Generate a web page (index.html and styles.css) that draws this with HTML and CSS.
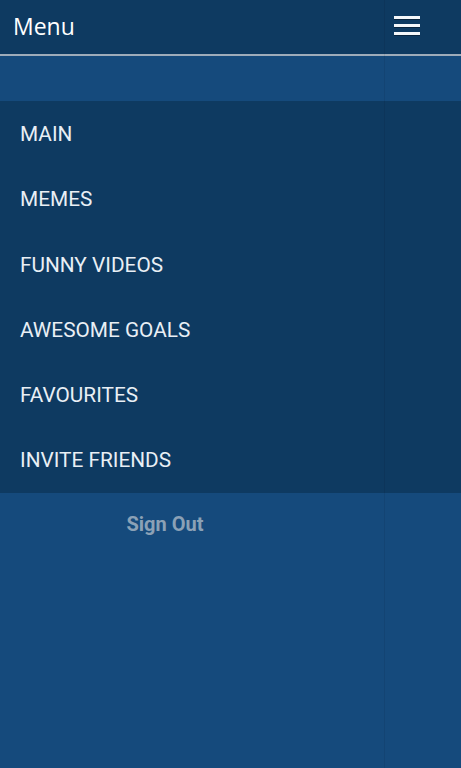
FILE: index.html
```html
<!DOCTYPE html>
<html lang="en">

<head>
    <meta charset="UTF-8">
    <meta name="viewport" content="width=device-width, initial-scale=1.0">
    <title>Menu</title>
    <link rel="stylesheet" href="styles.css">
</head>

<body>
    <div class="screen">
        <header class="topbar">
            <div class="topbar__title">Menu</div>
            <div class="topbar__toggle">
                <span></span>
                <span></span>
                <span></span>
            </div>
        </header>
        <div class="band"></div>
        <ul class="menu">
            <li class="menu__item">MAIN</li>
            <li class="menu__item">MEMES</li>
            <li class="menu__item">FUNNY VIDEOS</li>
            <li class="menu__item">AWESOME GOALS</li>
            <li class="menu__item">FAVOURITES</li>
            <li class="menu__item">INVITE FRIENDS</li>
        </ul>
        <div class="signout">
            <span class="signout__btn">Sign Out</span>
        </div>
        <div class="screen__divider"></div>
    </div>
</body>

</html>
```

FILE: styles.css
```css
*,
*::after,
*::before {
    padding: 0;
    margin: 0;
    box-sizing: border-box;
}

html,
body {
    height: 100%;
}

body {
    background: #154a7c;
    font-family: Roboto, "Noto Sans", sans-serif;
}

.screen {
    position: relative;
    min-height: 100%;
}

.topbar {
    height: 56px;
    display: flex;
    align-items: flex-start;
    justify-content: space-between;
    background: #0e3a61;
    border-bottom: 2px solid #9eacba;
}

.topbar__title {
    padding: 11px 0 0 13px;
    font-family: "Open Sans", sans-serif;
    font-size: 23px;
    line-height: 30px;
    color: #fff;
}

.topbar__toggle {
    width: 77px;
    padding: 16px 0 0 10px;
    display: flex;
    flex-direction: column;
    gap: 5px;
}

.topbar__toggle span {
    display: block;
    width: 26px;
    height: 3px;
    background: #f4f7fa;
    box-shadow: 0 1px 0 rgba(0, 0, 0, 0.35);
}

.band {
    height: 45px;
}

.menu {
    list-style: none;
    background: #0e3a61;
}

.menu__item {
    height: 65.3px;
    padding: 21px 0 0 20px;
    font-size: 20.8px;
    line-height: 24px;
    color: #e9eff5;
}

.signout {
    width: 330px;
    padding-top: 19px;
    text-align: center;
}

.signout__btn {
    font-size: 20px;
    font-weight: bold;
    line-height: 24px;
    color: #8ba1b6;
}

.screen__divider {
    position: absolute;
    top: 0;
    bottom: 0;
    left: 384px;
    width: 1px;
    height: 768px;
    background: rgba(0, 0, 0, 0.07);
}
```
